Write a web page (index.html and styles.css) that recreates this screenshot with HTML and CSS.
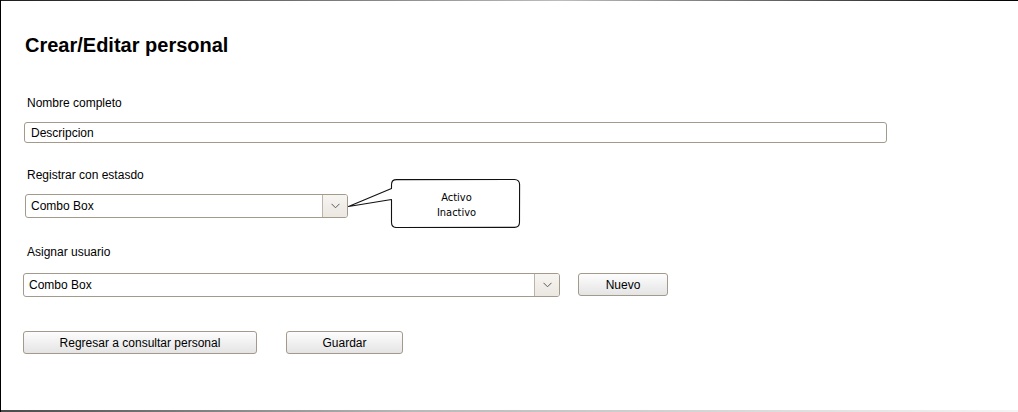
FILE: index.html
```html
<!DOCTYPE html>
<html lang="es">
<head>
  <meta charset="UTF-8">
  <title>Crear/Editar personal</title>
  <link rel="stylesheet" href="styles.css">
</head>
<body>

  <!-- Mockup frame -->
  <div class="frame">
    <h1 class="title">Crear/Editar personal</h1>

    <!-- Nombre -->
    <label class="label label-name">Nombre completo</label>
    <div class="textbox">Descripcion</div>

    <!-- Estado -->
    <label class="label label-state">Registrar con estasdo</label>
    <div class="row row-state">
      <div class="combo combo-state">
        <span class="combo-text">Combo Box</span>
        <span class="combo-btn">
          <svg width="9" height="6" viewBox="0 0 9 6"><path d="M0.5 0.8 L4.5 4.8 L8.5 0.8" fill="none" stroke="#5a5a5a" stroke-width="1"/></svg>
        </span>
      </div>

      <!-- callout note -->
      <svg class="callout" width="174" height="50" viewBox="0 0 174 50">
        <path d="M44.5 10.5 L1.5 28.5 L44.5 21.5 L44.5 44.5 Q44.6 49.4 49.5 49.5 L167.5 49.4 Q172.4 49.3 172.5 44.5 L172.6 6.5 Q172.5 1.6 167.5 1.5 L49.5 1.6 Q44.6 1.6 44.5 6.5 Z" fill="#fff" stroke="#111" stroke-width="1.1" stroke-linejoin="round"/>
        <text x="109.5" y="22.5" text-anchor="middle">Activo</text>
        <text x="109.5" y="37.5" text-anchor="middle">Inactivo</text>
      </svg>
    </div>

    <!-- Usuario -->
    <label class="label label-user">Asignar usuario</label>
    <div class="row row-user">
      <div class="combo combo-user">
        <span class="combo-text">Combo Box</span>
        <span class="combo-btn">
          <svg width="9" height="6" viewBox="0 0 9 6"><path d="M0.5 0.8 L4.5 4.8 L8.5 0.8" fill="none" stroke="#5a5a5a" stroke-width="1"/></svg>
        </span>
      </div>
      <button class="btn btn-new">Nuevo</button>
    </div>

    <!-- Acciones -->
    <div class="row row-actions">
      <button class="btn btn-back">Regresar a consultar personal</button>
      <button class="btn btn-save">Guardar</button>
    </div>
  </div>

</body>
</html>
```

FILE: styles.css
```css
body {
  margin: 0;
  background: #fff;
  overflow: hidden;
  font-family: "Liberation Sans", Arial, sans-serif;
  color: #000;
}

.frame {
  box-sizing: border-box;
  height: 412px;
  padding: 33px 0 0 22px;
  border-left: 1px solid #000;
  background:
    linear-gradient(to right, #1c1c1c, #bdbdbd 55%, #000) top left / 100% 1px no-repeat,
    linear-gradient(to right, #4a4a4a, #b8b8b8 40%, #f4f4f4) bottom left / 100% 2px no-repeat,
    #fff;
}

.title {
  margin: 0 0 0 2px;
  font-size: 20px;
  line-height: 24px;
  font-weight: bold;
}

.label {
  display: block;
  margin-left: 4px;
  font-size: 12px;
  line-height: 14px;
}

.label-name {
  margin-top: 39px;
}

.label-state {
  margin-top: 25px;
}

.label-user {
  margin-top: 27px;
}

.textbox {
  box-sizing: border-box;
  width: 863px;
  height: 21px;
  margin: 12px 0 0 1px;
  padding-left: 6px;
  border: 1px solid #a39a8c;
  border-radius: 3px;
  font-size: 12px;
  line-height: 20px;
}

.row {
  display: flex;
  align-items: flex-start;
  position: relative;
}

.row-state {
  margin-top: 12px;
}

.row-user {
  margin-top: 14px;
  gap: 18px;
}

.row-actions {
  margin-top: 34px;
  gap: 29px;
}

/* Combo box */
.combo {
  box-sizing: border-box;
  display: flex;
  height: 24px;
  border: 1px solid #a39a8c;
  border-radius: 3px;
  overflow: hidden;
  background: #fff;
}

.combo-state {
  width: 323px;
  margin-left: 2px;
}

.combo-user {
  width: 537px;
}

.combo-text {
  flex: 1;
  padding-left: 5px;
  font-size: 12px;
  line-height: 23px;
}

.combo-btn {
  width: 24px;
  display: flex;
  align-items: center;
  justify-content: center;
  border-left: 1px solid #bcb4a8;
  background: linear-gradient(#f7f5f2, #ebe7e1);
}

/* Callout annotation */
.callout {
  position: absolute;
  left: 324px;
  top: -16px;
}

.callout text {
  font-family: "DejaVu Sans Condensed", "DejaVu Sans", sans-serif;
  font-stretch: condensed;
  font-size: 11px;
  fill: #000;
}

/* Buttons */
.btn {
  box-sizing: border-box;
  height: 23px;
  padding: 0;
  border: 1px solid #a39a8c;
  border-radius: 3px;
  background: linear-gradient(#fdfdfd, #e4e4e4);
  font-family: "Liberation Sans", Arial, sans-serif;
  font-size: 12px;
  color: #000;
}

.btn-new {
  width: 90px;
}

.btn-back {
  width: 234px;
}

.btn-save {
  width: 117px;
}
```
